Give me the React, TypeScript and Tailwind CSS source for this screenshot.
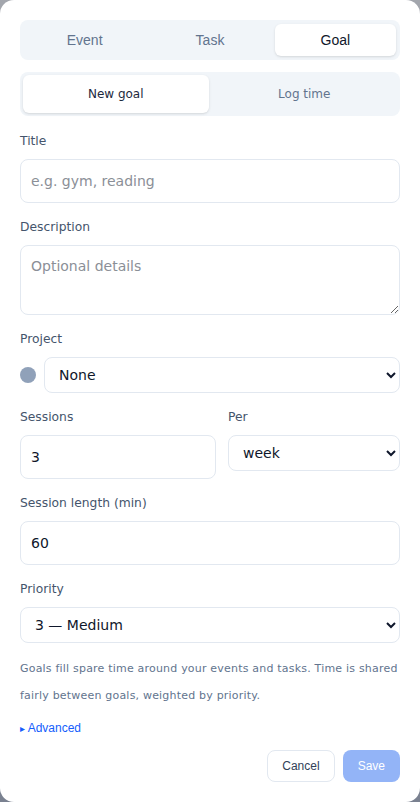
import { useState } from "react";

const sans = "font-['DejaVu_Sans',sans-serif]";
const arial = "font-['Liberation_Sans',Arial,sans-serif]";

const labelClass = `block text-[12.3px] leading-4 text-slate-600 mb-[10px] ${sans}`;
const inputClass = `w-full h-11 rounded-lg border border-slate-200 bg-white px-[10px] text-[14px] text-slate-900 placeholder:text-[#8b8f97] outline-none ${sans}`;
const selectClass = `w-full h-9 rounded-lg border border-slate-200 bg-white px-[10px] text-[14px] text-slate-900 outline-none ${sans}`;

export default function App() {
  const [kind, setKind] = useState("Goal");
  const [mode, setMode] = useState("new");

  return (
    <div className="min-h-[802px] bg-gradient-to-b from-[#a3a6ad] to-[#7a8190]">
      <div className="flex h-[802px] flex-col rounded-[14px] bg-white px-5 pt-5">
        {/* Kind tabs */}
        <div className="grid h-10 grid-cols-3 gap-1 rounded-lg bg-slate-100 p-1">
          {["Event", "Task", "Goal"].map((k) => (
            <button
              key={k}
              type="button"
              onClick={() => setKind(k)}
              className={`rounded-md text-[14px] ${arial} ${
                kind === k ? "bg-white text-slate-900 shadow-sm" : "text-slate-500"
              }`}
            >
              {k}
            </button>
          ))}
        </div>

        {/* Goal mode */}
        <div className="mt-3 grid h-11 grid-cols-2 gap-[3px] rounded-lg bg-slate-100 p-[3px]">
          <button
            type="button"
            onClick={() => setMode("new")}
            className={`rounded-md text-[12px] ${sans} ${mode === "new" ? "bg-white text-slate-800 shadow-sm" : "text-slate-500"}`}
          >
            New goal
          </button>
          <button
            type="button"
            onClick={() => setMode("log")}
            className={`rounded-md text-[12px] ${sans} ${mode === "log" ? "bg-white text-slate-800 shadow-sm" : "text-slate-500"}`}
          >
            Log time
          </button>
        </div>

        <div className="mt-[17px]">
          <label className={labelClass}>Title</label>
          <input className={inputClass} placeholder="e.g. gym, reading" />
        </div>

        <div className="mt-4">
          <label className={labelClass}>Description</label>
          <textarea className={`${inputClass} block h-[70px] py-[10px]`} placeholder="Optional details" />
        </div>

        <div className="mt-4">
          <label className={labelClass}>Project</label>
          <div className="flex items-center gap-2">
            <span className="h-4 w-4 shrink-0 rounded-full bg-slate-400" />
            <select className={selectClass} defaultValue="none">
              <option value="none">None</option>
            </select>
          </div>
        </div>

        <div className="mt-4 grid grid-cols-[196px_1fr] gap-3">
          <div>
            <label className={labelClass}>Sessions</label>
            <input className={inputClass} defaultValue="3" />
          </div>
          <div>
            <label className={labelClass}>Per</label>
            <select className={selectClass} defaultValue="week">
              <option value="day">day</option>
              <option value="week">week</option>
              <option value="month">month</option>
            </select>
          </div>
        </div>

        <div className="mt-4">
          <label className={labelClass}>Session length (min)</label>
          <input className={inputClass} defaultValue="60" />
        </div>

        <div className="mt-4">
          <label className={labelClass}>Priority</label>
          <select className={selectClass} defaultValue="3">
            <option value="1">1 — Lowest</option>
            <option value="2">2 — Low</option>
            <option value="3">3 — Medium</option>
            <option value="4">4 — High</option>
            <option value="5">5 — Highest</option>
          </select>
        </div>

        <p className={`mt-[12px] text-[11px] leading-[27px] tracking-[0.2px] text-slate-500 ${sans}`}>
          Goals fill spare time around your events and tasks. Time is shared fairly between goals, weighted by priority.
        </p>

        <div className={`mt-[9px] text-[12px] leading-5 text-blue-600 ${arial}`}>
          <span className="text-[10px]">▸</span>
          {" "}Advanced
        </div>

        <div className="mt-[11px] flex justify-end gap-2">
          <button type="button" className={`h-8 rounded-lg border border-slate-200 bg-white px-[14px] text-[12px] text-slate-700 ${arial}`}>
            Cancel
          </button>
          <button type="button" className={`h-8 rounded-lg bg-[#93b4f7] px-[15px] text-[12px] text-white ${arial}`}>
            Save
          </button>
        </div>
      </div>
    </div>
  );
}
